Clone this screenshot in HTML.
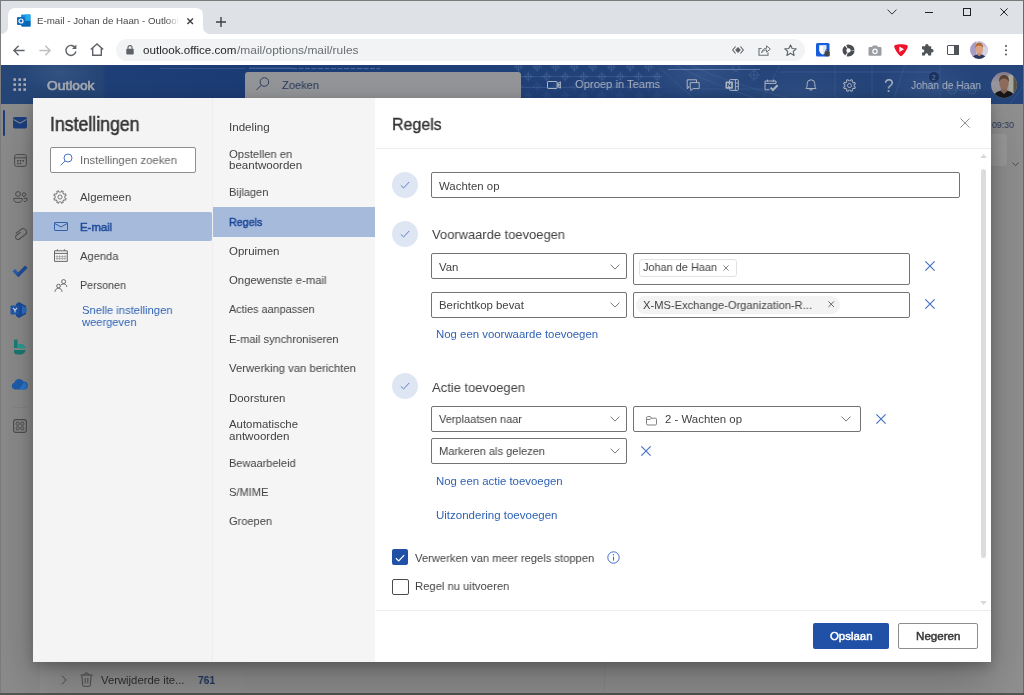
<!DOCTYPE html><html lang="nl"><head><meta charset="utf-8"><title>E-mail - Johan de Haan - Outlook</title><style>
*{box-sizing:border-box}
html,body{margin:0;padding:0}
body{width:1024px;height:695px;position:relative;overflow:hidden;background:#8f8f8f;font-family:"Liberation Sans",sans-serif}
.a{position:absolute}
.t{will-change:transform;position:absolute;white-space:pre;line-height:1;transform-origin:0 0;font-family:"Liberation Sans",sans-serif}
svg{position:absolute;overflow:visible}
.dd{position:absolute;height:26px;border:1px solid #737373;border-radius:2px;background:#fff}
.circ{position:absolute;width:26px;height:26px;border-radius:13px;background:#dfe6f3}
</style></head><body>
<div class="a" style="left:0;top:0;width:1024px;height:34px;background:#dee1e6"></div>
<div class="a" style="left:0;top:34px;width:1024px;height:31px;background:#fff"></div>
<div class="a" style="left:8px;top:7.5px;width:195px;height:27.5px;background:#fff;border-radius:7px 7px 0 0"></div>
<svg style="left:1px;top:27px" width="7" height="7" viewBox="0 0 7 7"><path d="M7 0 V7 H0 A7 7 0 0 0 7 0Z" fill="#fff"/></svg>
<svg style="left:203px;top:27px" width="7" height="7" viewBox="0 0 7 7"><path d="M0 0 V7 H7 A7 7 0 0 1 0 0Z" fill="#fff"/></svg>
<svg style="left:17px;top:14px" width="14" height="14" viewBox="0 0 14 14"><rect x="4" y="0.5" width="9.5" height="12" rx="1" fill="#1490df"/><rect x="8.5" y="0.5" width="5" height="6" fill="#28a8ea"/><path d="M4 7 L13.5 7 L13.5 12.5 L5 12.5Z" fill="#0a64b4"/><rect x="0" y="3" width="8" height="8" rx="1" fill="#0f6cbd"/><circle cx="4" cy="7" r="2" fill="none" stroke="#fff" stroke-width="1.2"/></svg>
<span class="t" style="left:36.5px;top:15px;line-height:11px;font-size:9.6px;transform:scaleX(1.0149);color:#45474a;font-weight:400;">E-mail - Johan de Haan - Outlook</span>
<div class="a" style="left:166px;top:10px;width:13px;height:22px;background:linear-gradient(90deg,rgba(255,255,255,0),#fff)"></div><div class="a" style="left:179px;top:10px;width:23px;height:22px;background:#fff"></div>
<svg style="left:186.60000000000002px;top:18.1px" width="6.4" height="6.4" viewBox="0 0 6.4 6.4"><path d="M0.4 0.4 L6.0 6.0 M6.0 0.4 L0.4 6.0" fill="none" stroke="#3c4043" stroke-width="1.4"/></svg>
<svg style="left:215.5px;top:16.5px" width="10" height="10" viewBox="0 0 10 10"><path d="M5 0 V10 M0 5 H10" stroke="#3c4043" stroke-width="1.4" fill="none"/></svg>
<svg style="left:886.8px;top:9.3px" width="10" height="6" viewBox="0 0 10 6"><path d="M0.5 0.6 L5 5.1 L9.5 0.6" fill="none" stroke="#333" stroke-width="1"/></svg>
<div class="a" style="left:925px;top:12px;width:8px;height:1px;background:#222"></div>
<div class="a" style="left:963px;top:8px;width:8px;height:8px;border:1px solid #222"></div>
<svg style="left:1000px;top:8px" width="8" height="8" viewBox="0 0 8 8"><path d="M0.4 0.4 L7.6 7.6 M7.6 0.4 L0.4 7.6" fill="none" stroke="#222" stroke-width="1"/></svg>
<svg style="left:13px;top:44.5px" width="12" height="11" viewBox="0 0 12 11"><path d="M11.6 5.5 H1.4 M5.6 0.8 L0.9 5.5 L5.6 10.2" fill="none" stroke="#5f6368" stroke-width="1.4"/></svg>
<svg style="left:39px;top:44.5px" width="12" height="11" viewBox="0 0 12 11"><path d="M0.4 5.5 H10.6 M6.4 0.8 L11.1 5.5 L6.4 10.2" fill="none" stroke="#bdbfc2" stroke-width="1.4"/></svg>
<svg style="left:65px;top:43.5px" width="12" height="12" viewBox="0 0 12 12"><path d="M10.3 3.9 A5 5 0 1 0 10.9 7.3" fill="none" stroke="#5f6368" stroke-width="1.4"/><path d="M11.4 0.6 V5 H7Z" fill="#5f6368"/></svg>
<svg style="left:90px;top:43px" width="14" height="13" viewBox="0 0 14 13"><path d="M0.8 6.6 L7 1 L13.2 6.6 M2.7 5.2 V12.2 H11.3 V5.2" fill="none" stroke="#5f6368" stroke-width="1.4"/></svg>
<div class="a" style="left:116px;top:39px;width:689px;height:22px;border-radius:11px;background:#f1f3f4"></div>
<svg style="left:126px;top:44.5px" width="8" height="10" viewBox="0 0 8 10"><rect x="0.3" y="3.8" width="7.4" height="5.8" rx="0.8" fill="#5f6368"/><path d="M2 4 V2.6 A2 2 0 0 1 6 2.6 V4" fill="none" stroke="#5f6368" stroke-width="1.1"/></svg>
<span class="t" style="left:142.8px;top:44px;line-height:12px;font-size:11px;transform:scaleX(1.0569);color:#25272a;font-weight:400;">outlook.office.com</span>
<span class="t" style="left:236.6px;top:44px;line-height:12px;font-size:11px;transform:scaleX(1.0860);color:#6b6e72;font-weight:400;">/mail/options/mail/rules</span>
<svg style="left:732px;top:45.6px" width="12" height="8" viewBox="0 0 12 8"><path d="M3.6 0.5 L0.7 4 L3.6 7.5 M8.4 0.5 L11.3 4 L8.4 7.5" fill="none" stroke="#5f6368" stroke-width="1.1"/><path d="M6 0.9 L8.9 4 L6 7.1 L3.1 4Z" fill="#5f6368"/></svg>
<svg style="left:758px;top:43.5px" width="13" height="12" viewBox="0 0 13 12"><path d="M3.5 4.5 H1 V11.3 H10 V8.5" fill="none" stroke="#6d7175" stroke-width="1.1"/><path d="M3.6 8.8 C4.2 5.6 6.2 4.3 8.6 4.2 V1.8 L12.3 5 L8.6 8.2 V5.9 C6.6 5.9 5 6.6 3.6 8.8Z" fill="none" stroke="#6d7175" stroke-width="1"/></svg>
<svg style="left:783.5px;top:43.5px" width="13" height="12" viewBox="0 0 13 12"><path d="M6.5 0.9 L8.2 4.5 L12.2 4.9 L9.2 7.5 L10.1 11.4 L6.5 9.3 L2.9 11.4 L3.8 7.5 L0.8 4.9 L4.8 4.5Z" fill="none" stroke="#5f6368" stroke-width="1.1" stroke-linejoin="round"/></svg>
<svg style="left:815.5px;top:43px" width="14" height="14" viewBox="0 0 14 14"><rect x="0" y="0" width="13.5" height="13.5" rx="1.5" fill="#175ddc"/><path d="M3.2 2.2 H10.3 V7.2 C10.3 9.6 8.3 11 6.75 11.6 C5.2 11 3.2 9.6 3.2 7.2Z" fill="#fff"/><path d="M6.75 2.2 H10.3 V7.2 C10.3 9.6 8.3 11 6.75 11.6Z" fill="#dce6fa"/><rect x="8.6" y="8.6" width="5" height="4.6" rx="0.6" fill="#444"/><path d="M9.7 8.8 V7.8 A1.4 1.4 0 0 1 12.5 7.8 V8.8" fill="none" stroke="#444" stroke-width="0.9"/></svg>
<svg style="left:841.5px;top:43.5px" width="13" height="13" viewBox="0 0 13 13"><circle cx="6.5" cy="6.5" r="4.1" fill="none" stroke="#4a4d51" stroke-width="3.9" stroke-dasharray="7.6 1"/></svg>
<svg style="left:867.5px;top:44.5px" width="14" height="11" viewBox="0 0 14 11"><path d="M1.5 2 H4 L5 0.6 H9 L10 2 H12.5 A1 1 0 0 1 13.5 3 V9.8 A1 1 0 0 1 12.5 10.8 H1.5 A1 1 0 0 1 0.5 9.8 V3 A1 1 0 0 1 1.5 2Z" fill="#9b9ea2"/><circle cx="7" cy="6.3" r="2.2" fill="none" stroke="#fff" stroke-width="1.2"/></svg>
<svg style="left:893.5px;top:43px" width="14" height="14" viewBox="0 0 14 14"><path d="M7 1.2 C9.5 1.2 11.4 1.5 12.8 2 C13.8 2.4 14 3.4 13.6 4.4 C12.4 7.6 10.4 10.6 8 12.8 C7.4 13.3 6.6 13.3 6 12.8 C3.6 10.6 1.6 7.6 0.4 4.4 C0 3.4 0.2 2.4 1.2 2 C2.6 1.5 4.5 1.2 7 1.2Z" fill="#f3122b"/><path d="M5.4 3.6 L10 6.2 L5.4 8.9Z" fill="#fff"/></svg>
<svg style="left:920px;top:43px" width="14" height="14" viewBox="0 0 14 14"><path d="M5.2 2.6 A1.7 1.7 0 0 1 8.6 2.6 V3.3 H11.2 V6 H11.9 A1.7 1.7 0 0 1 11.9 9.4 H11.2 V12.6 H8.2 V11.9 A1.6 1.6 0 0 0 5 11.9 V12.6 H2 V9.6 H2.6 A1.6 1.6 0 0 0 2.6 6.3 H2 V3.3 H5.2Z" fill="#4f5357"/></svg>
<div class="a" style="left:947px;top:44.5px;width:12px;height:10.5px;border:1.6px solid #4f5357;border-radius:1px"></div><div class="a" style="left:954.3px;top:44.5px;width:4.7px;height:10.5px;background:#4f5357"></div>
<svg style="left:970px;top:40.7px" width="18" height="18" viewBox="0 0 18 18"><defs><clipPath id="av2"><circle cx="9" cy="9" r="8.9"/></clipPath></defs><g clip-path="url(#av2)"><rect width="18" height="18" fill="#c9c2dc"/><rect x="0" y="0" width="6" height="18" fill="#a89cc4"/><rect x="13" y="6" width="5" height="12" fill="#d8d6dc"/><path d="M2 18 C2.5 15 5 14 7 13.6 L11.5 13.6 C13.5 14 15.5 15 16 18Z" fill="#2f3a58"/><ellipse cx="9.2" cy="8.3" rx="3.6" ry="4.9" fill="#d8a283"/><path d="M7.4 12 L11 12 L11 14 L9.2 15.2 L7.4 14Z" fill="#c58f74"/><path d="M5.5 7.4 C5 3.2 7 1.8 9.2 1.8 C11.6 1.8 13.4 3.2 12.9 7.4 C12.4 5.2 11.2 4.4 9.2 4.4 C7.2 4.4 6 5.2 5.5 7.4Z" fill="#b8692f"/></g></svg>
<div class="a" style="left:1004.5px;top:44.5px;width:2.4px;height:2.4px;border-radius:2px;background:#4f5357;box-shadow:0 4.2px 0 #4f5357,0 8.4px 0 #4f5357"></div>
<div class="a" style="left:0;top:65px;width:1024px;height:39px;background:linear-gradient(90deg,#264677 0,#264677 102px,#1e3f78 106px,#1c3c76 245px,#21417a 521px,#24447a 700px,#26467b 1024px)"></div>
<div class="a" style="left:0;top:65px;width:1024px;height:39px;background:radial-gradient(ellipse 60px 30px at 700px 10px,rgba(120,150,200,.18),rgba(120,150,200,0)),radial-gradient(ellipse 70px 30px at 800px 30px,rgba(120,150,200,.12),rgba(120,150,200,0)),radial-gradient(ellipse 50px 30px at 930px 20px,rgba(120,150,200,.14),rgba(120,150,200,0)),radial-gradient(ellipse 40px 20px at 60px 8px,rgba(130,160,200,.15),rgba(120,150,200,0))"></div>
<svg style="left:0;top:65px;overflow:hidden" width="1024" height="39" viewBox="0 0 1024 39"><g fill="none" stroke="#5d7bab" stroke-width="0.7"><g opacity="0.55"><circle cx="518.5" cy="2.0" r="2.8"/><path d="M513.5 2.0 H523.5 M518.5 -3.0 V7.0"/><circle cx="537.1" cy="2.0" r="2.8"/><path d="M532.1 2.0 H542.1 M537.1 -3.0 V7.0"/><circle cx="555.7" cy="2.0" r="2.8"/><path d="M550.7 2.0 H560.7 M555.7 -3.0 V7.0"/><circle cx="574.3" cy="2.0" r="2.8"/><path d="M569.3 2.0 H579.3 M574.3 -3.0 V7.0"/><circle cx="592.9" cy="2.0" r="2.8"/><path d="M587.9 2.0 H597.9 M592.9 -3.0 V7.0"/><circle cx="611.5" cy="2.0" r="2.8"/><path d="M606.5 2.0 H616.5 M611.5 -3.0 V7.0"/><circle cx="630.1" cy="2.0" r="2.8"/><path d="M625.1 2.0 H635.1 M630.1 -3.0 V7.0"/><circle cx="648.7" cy="2.0" r="2.8"/><path d="M643.7 2.0 H653.7 M648.7 -3.0 V7.0"/><circle cx="528.3" cy="11.6" r="2.8"/><path d="M523.3 11.6 H533.3 M528.3 6.6 V16.6"/><circle cx="546.7" cy="11.6" r="2.8"/><path d="M541.7 11.6 H551.7 M546.7 6.6 V16.6"/><circle cx="565.1" cy="11.6" r="2.8"/><path d="M560.1 11.6 H570.1 M565.1 6.6 V16.6"/><circle cx="583.5" cy="11.6" r="2.8"/><path d="M578.5 11.6 H588.5 M583.5 6.6 V16.6"/><circle cx="601.9" cy="11.6" r="2.8"/><path d="M596.9 11.6 H606.9 M601.9 6.6 V16.6"/><circle cx="620.3" cy="11.6" r="2.8"/><path d="M615.3 11.6 H625.3 M620.3 6.6 V16.6"/><circle cx="638.7" cy="11.6" r="2.8"/><path d="M633.7 11.6 H643.7 M638.7 6.6 V16.6"/><circle cx="657.1" cy="11.6" r="2.8"/><path d="M652.1 11.6 H662.1 M657.1 6.6 V16.6"/></g><g opacity="0.22"><circle cx="518.5" cy="21.2" r="2.8"/><path d="M513.5 21.2 H523.5 M518.5 16.2 V26.2"/><circle cx="537.1" cy="21.2" r="2.8"/><path d="M532.1 21.2 H542.1 M537.1 16.2 V26.2"/><circle cx="555.7" cy="21.2" r="2.8"/><path d="M550.7 21.2 H560.7 M555.7 16.2 V26.2"/><circle cx="574.3" cy="21.2" r="2.8"/><path d="M569.3 21.2 H579.3 M574.3 16.2 V26.2"/><circle cx="592.9" cy="21.2" r="2.8"/><path d="M587.9 21.2 H597.9 M592.9 16.2 V26.2"/><circle cx="611.5" cy="21.2" r="2.8"/><path d="M606.5 21.2 H616.5 M611.5 16.2 V26.2"/><circle cx="630.1" cy="21.2" r="2.8"/><path d="M625.1 21.2 H635.1 M630.1 16.2 V26.2"/><circle cx="648.7" cy="21.2" r="2.8"/><path d="M643.7 21.2 H653.7 M648.7 16.2 V26.2"/><circle cx="528.3" cy="30.8" r="2.8"/><path d="M523.3 30.8 H533.3 M528.3 25.8 V35.8"/><circle cx="546.7" cy="30.8" r="2.8"/><path d="M541.7 30.8 H551.7 M546.7 25.8 V35.8"/><circle cx="565.1" cy="30.8" r="2.8"/><path d="M560.1 30.8 H570.1 M565.1 25.8 V35.8"/><circle cx="583.5" cy="30.8" r="2.8"/><path d="M578.5 30.8 H588.5 M583.5 25.8 V35.8"/><circle cx="601.9" cy="30.8" r="2.8"/><path d="M596.9 30.8 H606.9 M601.9 25.8 V35.8"/><circle cx="620.3" cy="30.8" r="2.8"/><path d="M615.3 30.8 H625.3 M620.3 25.8 V35.8"/><circle cx="638.7" cy="30.8" r="2.8"/><path d="M633.7 30.8 H643.7 M638.7 25.8 V35.8"/><circle cx="657.1" cy="30.8" r="2.8"/><path d="M652.1 30.8 H662.1 M657.1 25.8 V35.8"/></g><g opacity="0.5"><path d="M521 22.4 H662 M521 11.6 H660 M160 3.5 H245"/><circle cx="754" cy="10" r="4"/><path d="M748 10 H760 M754 4 V16"/><circle cx="736" cy="3" r="3.4"/><circle cx="952" cy="25" r="4"/><circle cx="972" cy="25" r="4"/><path d="M946 25 H978"/></g><g opacity="0.35"><path d="M676 0 C700 14 730 24 770 39 M690 0 C715 12 745 22 800 36 M660 3 L700 39 M835 0 V39 M872 0 V39 M905 0 L892 39 M780 0 L760 39 M700 24 H780 M940 0 V39 M1010 39 L1024 20"/></g><g stroke="#7f9cc9" opacity="0.6"><path d="M668 4.5 H760" stroke-width="1"/><path d="M249 3.2 H292" stroke-width="0.9"/><path d="M292 3.6 H380" stroke-width="1" stroke-dasharray="5 1.5" opacity=".8"/><path d="M780 7 H940" stroke-width="0.6" opacity=".5"/></g></g></svg>
<div class="a" style="left:928.5px;top:71.5px;width:10.5px;height:10.5px;border-radius:6px;background:rgba(24,44,86,.75)"></div>
<span class="t" style="left:932.0px;top:74px;line-height:7px;font-size:6.5px;transform:scaleX(1.0000);color:#6d84ad;font-weight:400;">2</span>
<svg style="left:13px;top:78px" width="14" height="14" viewBox="0 0 14 14"><rect x="0.4" y="0.3" width="2.6" height="2.6" fill="#a8aab0"/><rect x="0.4" y="5.3" width="2.6" height="2.6" fill="#a8aab0"/><rect x="0.4" y="10.3" width="2.6" height="2.6" fill="#a8aab0"/><rect x="5.4" y="0.3" width="2.6" height="2.6" fill="#a8aab0"/><rect x="5.4" y="5.3" width="2.6" height="2.6" fill="#a8aab0"/><rect x="5.4" y="10.3" width="2.6" height="2.6" fill="#a8aab0"/><rect x="10.4" y="0.3" width="2.6" height="2.6" fill="#a8aab0"/><rect x="10.4" y="5.3" width="2.6" height="2.6" fill="#a8aab0"/><rect x="10.4" y="10.3" width="2.6" height="2.6" fill="#a8aab0"/></svg>
<span class="t" style="left:46.5px;top:78px;line-height:15px;font-size:13px;transform:scaleX(1.0600);color:#a4a9b3;font-weight:400;-webkit-text-stroke:0.7px #a4a9b3;">Outlook</span>
<div class="a" style="left:245px;top:72px;width:276px;height:30px;border-radius:3px;background:#949699"></div>
<svg style="left:256px;top:77.2px" width="13" height="14" viewBox="0 0 13 14"><circle cx="8.4" cy="5" r="4.3" fill="none" stroke="#2f3f5f" stroke-width="1"/><path d="M5.3 8.1 L0.5 12.9" stroke="#2f3f5f" stroke-width="1"/></svg>
<span class="t" style="left:282.0px;top:79px;line-height:12px;font-size:11.4px;transform:scaleX(0.9737);color:#27395c;font-weight:400;">Zoeken</span>
<svg style="left:547px;top:80.5px" width="15" height="8" viewBox="0 0 15 8"><rect x="0.5" y="0.5" width="9.6" height="7" rx="0.6" fill="none" stroke="#b0b7c6" stroke-width="1"/><path d="M10.2 2.6 L13.4 0.8 V7.2 L10.2 5.4" fill="none" stroke="#b0b7c6" stroke-width="1"/><rect x="10.6" y="2.6" width="2" height="2.8" fill="#b0b7c6"/></svg>
<span class="t" style="left:575.0px;top:77px;line-height:14px;font-size:11.8px;transform:scaleX(0.9484);color:#b0b7c6;font-weight:400;">Oproep in Teams</span>
<svg style="left:686px;top:78.5px" width="14" height="13" viewBox="0 0 14 13"><path d="M3 7.8 H1.2 V0.8 H10.5 V3.2" fill="none" stroke="#b0b7c6" stroke-width="1"/><path d="M4.2 3.6 H13.2 V9.6 H7 L4.8 11.6 V9.6 H4.2Z" fill="none" stroke="#b0b7c6" stroke-width="1"/><path d="M1.2 7.8 L1.2 10 L3.2 7.8" fill="none" stroke="#b0b7c6" stroke-width="0.9"/></svg>
<svg style="left:725px;top:79px" width="14" height="12" viewBox="0 0 14 12"><rect x="4.5" y="0.6" width="8.8" height="10.8" rx="0.8" fill="none" stroke="#b0b7c6" stroke-width="1"/><path d="M10.4 0.6 V11.4 M10.4 4 H13.3 M10.4 7.6 H13.3" stroke="#b0b7c6" stroke-width="0.9"/><rect x="0.5" y="2.4" width="7.4" height="7.4" rx="0.7" fill="#b0b7c6"/><path d="M2.7 8 V4.2 L5.7 8 V4.2" fill="none" stroke="#274778" stroke-width="1"/></svg>
<svg style="left:764px;top:78.5px" width="15" height="13" viewBox="0 0 15 13"><path d="M12 4.5 V2 H1 V10.8 H5.5 M1 4.4 H12 M3.6 0.6 V3 M9.4 0.6 V3" fill="none" stroke="#b0b7c6" stroke-width="1"/><path d="M6.6 8.6 L8.9 11 L13.6 6.2" fill="none" stroke="#b0b7c6" stroke-width="2"/></svg>
<svg style="left:804.5px;top:78px" width="12" height="14" viewBox="0 0 12 14"><path d="M1 10.5 C2.3 9 2.1 7.4 2.2 5.6 A3.8 3.8 0 0 1 9.8 5.6 C9.9 7.4 9.7 9 11 10.5Z" fill="none" stroke="#b0b7c6" stroke-width="1" stroke-linejoin="round"/><path d="M4.4 11 A1.7 1.7 0 0 0 7.6 11" fill="none" stroke="#b0b7c6" stroke-width="1"/></svg>
<svg style="left:842.5px;top:78.5px" width="13" height="13" viewBox="0 0 13 13"><path d="M11.09 5.47 L12.55 5.74 L12.55 7.26 L11.09 7.53 L10.47 9.02 L11.32 10.24 L10.24 11.32 L9.02 10.47 L7.53 11.09 L7.26 12.55 L5.74 12.55 L5.47 11.09 L3.98 10.47 L2.76 11.32 L1.68 10.24 L2.53 9.02 L1.91 7.53 L0.45 7.26 L0.45 5.74 L1.91 5.47 L2.53 3.98 L1.68 2.76 L2.76 1.68 L3.98 2.53 L5.47 1.91 L5.74 0.45 L7.26 0.45 L7.53 1.91 L9.02 2.53 L10.24 1.68 L11.32 2.76 L10.47 3.98Z" fill="none" stroke="#b0b7c6" stroke-width="0.95" stroke-linejoin="round" transform="rotate(22.5 6.5 6.5)"/><circle cx="6.5" cy="6.5" r="2" fill="none" stroke="#b0b7c6" stroke-width="0.95"/></svg>
<span class="t" style="left:883.6px;top:75px;line-height:21px;font-size:19px;transform:scaleX(0.9075);color:#b0b7c6;font-weight:400;">?</span>
<span class="t" style="left:911.0px;top:78px;line-height:14px;font-size:11.8px;transform:scaleX(0.8747);color:#b0b7c6;font-weight:400;">Johan de Haan</span>
<svg style="left:990.5px;top:71.8px" width="26" height="26" viewBox="0 0 26 26"><defs><clipPath id="av1"><circle cx="13" cy="13" r="12.9"/></clipPath><linearGradient id="avbg" x1="0" y1="0" x2="0" y2="1"><stop offset="0" stop-color="#84798a"/><stop offset="0.45" stop-color="#9a99a0"/><stop offset="1" stop-color="#8d8d88"/></linearGradient></defs><g clip-path="url(#av1)"><rect width="26" height="26" fill="url(#avbg)"/><rect x="17.5" y="3" width="5" height="18" fill="#a8a79c"/><rect x="22.5" y="0" width="4" height="26" fill="#5d5448"/><path d="M2.5 26 C3 21 6 19.5 10 18.8 L16 18.8 C20 19.5 23 21 23.5 26Z" fill="#17171a"/><path d="M10.2 16 L15.8 16 L16 19.5 L13 22 L10 19.5Z" fill="#80604f"/><ellipse cx="13" cy="11.6" rx="4.6" ry="6.3" fill="#8f6c5b"/><path d="M8.2 10.5 C7.6 5 10 3 13 3 C16 3 18.6 5 17.8 10.5 C17.2 7.6 15.6 6.4 13 6.4 C10.4 6.4 8.8 7.6 8.2 10.5Z" fill="#5b4132"/></g></svg>
<div class="a" style="left:0;top:104px;width:40px;height:591px;background:#8c8c8c"></div>
<div class="a" style="left:40px;top:104px;width:205px;height:591px;background:#919191"></div>
<div class="a" style="left:245px;top:104px;width:779px;height:591px;background:#909090"></div>
<div class="a" style="left:604px;top:104px;width:1px;height:591px;background:#8a8a8a"></div>
<div class="a" style="left:3px;top:110px;width:2px;height:26px;border-radius:1px;background:#1e3f7c"></div>
<svg style="left:13px;top:117px" width="14" height="12" viewBox="0 0 14 12"><rect x="0" y="0" width="14" height="11.4" rx="2" fill="#1c3f80"/><path d="M0.6 2.6 L7 6.2 L13.4 2.6" fill="none" stroke="#8c8c8c" stroke-width="1.1"/></svg>
<svg style="left:14px;top:154px" width="13" height="13" viewBox="0 0 13 13"><rect x="0.6" y="0.6" width="11.8" height="11.8" rx="2" fill="none" stroke="#4e4e4e" stroke-width="1"/><path d="M0.6 3.8 H12.4" stroke="#4e4e4e" stroke-width="1"/><g fill="#4e4e4e"><rect x="3" y="6" width="1.6" height="1.6"/><rect x="5.7" y="6" width="1.6" height="1.6"/><rect x="8.4" y="6" width="1.6" height="1.6"/><rect x="3" y="8.7" width="1.6" height="1.6"/><rect x="5.7" y="8.7" width="1.6" height="1.6"/></g></svg>
<svg style="left:13px;top:191px" width="15" height="12" viewBox="0 0 15 12"><circle cx="5" cy="3" r="2.4" fill="none" stroke="#4e4e4e" stroke-width="1"/><circle cx="11" cy="3.6" r="1.8" fill="none" stroke="#4e4e4e" stroke-width="1"/><path d="M0.8 7.4 H9.2 V8.4 C9.2 10.4 7.4 11.4 5 11.4 C2.6 11.4 0.8 10.4 0.8 8.4Z" fill="none" stroke="#4e4e4e" stroke-width="1"/><path d="M10.6 7.4 H14.2 V8.2 C14.2 9.8 13 10.6 10.8 10.6" fill="none" stroke="#4e4e4e" stroke-width="1"/></svg>
<svg style="left:14px;top:228px" width="13" height="14" viewBox="0 0 13 14"><path d="M6.2 4.2 L2.6 7.8 A2.3 2.3 0 0 0 5.9 11.1 L11 6 A3.3 3.3 0 0 0 6.3 1.3 L1.6 6" fill="none" stroke="#4e4e4e" stroke-width="1" transform="rotate(8 6.5 7)"/></svg>
<svg style="left:12px;top:265px" width="16" height="13" viewBox="0 0 16 13"><path d="M0.6 6.4 L3 4 L6.4 7.4 L3.9 9.8Z" fill="#2a5fb4"/><path d="M3.9 9.8 L6.4 12.2 L15.6 3 L13.1 0.6Z" fill="#1f4f9f"/></svg>
<svg style="left:10px;top:301px" width="18" height="18" viewBox="0 0 18 18"><path d="M9 1 L16 5 V13 L9 17 L6 15 V3Z" fill="#1b4d99"/><path d="M12 4.5 L16.6 7 V11 L12 13.5Z" fill="#2f6ec5"/><rect x="0.5" y="4.5" width="9" height="9" rx="1" fill="#1f57ad"/><path d="M3 6.8 L5 9.4 L7 6.8 M5 9.4 V11.6" fill="none" stroke="#d8d8d8" stroke-width="1.1"/></svg>
<svg style="left:13px;top:339px" width="13" height="16" viewBox="0 0 13 16"><path d="M1 0.6 H4.6 V9 H1Z" fill="#1b7f79"/><path d="M4.6 5 H8 A4.6 4.6 0 0 1 12.4 9.6 H4.6Z" fill="#2a9d92"/><path d="M1 11 H12.4 A4.4 4.4 0 0 1 8 15.4 H4 A3 3 0 0 1 1 12.4Z" fill="#197a74"/></svg>
<svg style="left:11px;top:378px" width="18" height="12" viewBox="0 0 18 12"><path d="M4 11.4 A3.4 3.4 0 0 1 3.4 4.7 A5 5 0 0 1 12.6 3.6 A4 4 0 0 1 14 11.4Z" fill="#1e5fae"/><path d="M8 11.4 L13 4.2 A4 4 0 0 1 14 11.4Z" fill="#2c79cf"/></svg>
<div class="a" style="left:13px;top:407px;width:14px;height:1px;background:#858585"></div>
<svg style="left:13px;top:419px" width="14" height="14" viewBox="0 0 14 14"><rect x="0.6" y="0.6" width="12.8" height="12.8" rx="2.4" fill="none" stroke="#4e4e4e" stroke-width="1.1"/><g fill="none" stroke="#4e4e4e" stroke-width="1"><rect x="3.2" y="3.2" width="3" height="3" rx="0.8"/><rect x="7.8" y="3.2" width="3" height="3" rx="0.8"/><rect x="3.2" y="7.8" width="3" height="3" rx="0.8"/><rect x="7.8" y="7.8" width="3" height="3" rx="0.8"/></g></svg>
<svg style="left:61px;top:674.5px" width="6" height="10" viewBox="0 0 6 10"><path d="M0.8 0.6 L5.2 5 L0.8 9.4" fill="none" stroke="#4e4e4e" stroke-width="1"/></svg>
<svg style="left:80px;top:672px" width="13" height="15" viewBox="0 0 13 15"><path d="M0.5 3 H12.5 M4.4 3 A2.1 2.1 0 0 1 8.6 3 M1.8 3 L2.7 13.2 A1.2 1.2 0 0 0 3.9 14.3 H9.1 A1.2 1.2 0 0 0 10.3 13.2 L11.2 3 M5.2 6 V11.4 M7.8 6 V11.4" fill="none" stroke="#4e4e4e" stroke-width="1"/></svg>
<span class="t" style="left:101.0px;top:674px;line-height:12px;font-size:11.2px;transform:scaleX(1.0094);color:#2e2e2e;font-weight:400;">Verwijderde ite...</span>
<span class="t" style="left:197.5px;top:674px;line-height:12px;font-size:11.2px;transform:scaleX(0.9105);color:#1c3561;font-weight:700;">761</span>
<div class="a" style="left:986px;top:133.5px;width:20.5px;height:32.5px;border-radius:3px;background:#9a9a9a"></div>
<span class="t" style="left:991.5px;top:119px;line-height:11px;font-size:9.6px;transform:scaleX(0.9161);color:#273a5e;font-weight:400;">09:30</span>
<svg style="left:1011.5px;top:161.5px" width="7" height="4.5" viewBox="0 0 7 4.5"><path d="M0.4 0.5 L3.5 3.7 L6.6 0.5" fill="none" stroke="#4c4543" stroke-width="0.9"/></svg>
<div class="a" style="left:0;top:0;width:1024px;height:1px;background:#7a7a7a"></div>
<div class="a" style="left:0;top:0;width:1px;height:695px;background:#7d7d7d"></div>
<div class="a" style="left:1023px;top:0;width:1px;height:695px;background:#6a6a6a"></div>
<div class="a" style="left:0;top:693px;width:1024px;height:2px;background:#555"></div>
<div class="a" style="left:33px;top:98px;width:957.5px;height:563.5px;background:#fff;box-shadow:0 20px 46px rgba(0,0,0,.26),0 4px 12px rgba(0,0,0,.24)"></div>
<div class="a" style="left:33px;top:98px;width:179.5px;height:563.5px;background:#f4f4f4"></div>
<div class="a" style="left:212px;top:98px;width:163.4px;height:563.5px;background:#f5f5f5;border-left:1px solid #eeeeee"></div>
<span class="t" style="left:50.0px;top:113px;line-height:22px;font-size:19.6px;transform:scaleX(0.9028);color:#333;font-weight:400;-webkit-text-stroke:0.55px #333;">Instellingen</span>
<div class="a" style="left:50px;top:147px;width:146px;height:26px;border:1px solid #8d8d8d;border-radius:2px;background:#fff"></div>
<svg style="left:60px;top:153px" width="13" height="13" viewBox="0 0 13 13"><circle cx="8" cy="5" r="4" fill="none" stroke="#4b74c4" stroke-width="1"/><path d="M5.1 7.9 L0.6 12.4" stroke="#4b74c4" stroke-width="1"/></svg>
<span class="t" style="left:80.0px;top:154px;line-height:12px;font-size:11.4px;transform:scaleX(0.9946);color:#666;font-weight:400;">Instellingen zoeken</span>
<div class="a" style="left:33px;top:212px;width:179px;height:29px;background:#a6badc;border-radius:0 2px 2px 0"></div>
<svg style="left:53px;top:190px" width="14" height="14" viewBox="0 0 14 14"><path d="M11.78 5.93 L13.35 6.20 L13.35 7.80 L11.78 8.07 L11.14 9.63 L12.06 10.92 L10.92 12.06 L9.63 11.14 L8.07 11.78 L7.80 13.35 L6.20 13.35 L5.93 11.78 L4.37 11.14 L3.08 12.06 L1.94 10.92 L2.86 9.63 L2.22 8.07 L0.65 7.80 L0.65 6.20 L2.22 5.93 L2.86 4.37 L1.94 3.08 L3.08 1.94 L4.37 2.86 L5.93 2.22 L6.20 0.65 L7.80 0.65 L8.07 2.22 L9.63 2.86 L10.92 1.94 L12.06 3.08 L11.14 4.37Z" fill="none" stroke="#686868" stroke-width="0.9" stroke-linejoin="round" transform="rotate(22.5 7 7)"/><circle cx="7" cy="7" r="2.1" fill="none" stroke="#686868" stroke-width="0.9"/></svg>
<span class="t" style="left:80.0px;top:191px;line-height:12px;font-size:11.4px;transform:scaleX(0.9942);color:#414141;font-weight:400;">Algemeen</span>
<svg style="left:53.5px;top:222px" width="14" height="9" viewBox="0 0 14 9"><rect x="0.5" y="0.5" width="13" height="8" rx="0.6" fill="none" stroke="#2c59a8" stroke-width="0.95"/><path d="M0.8 1.5 L7 5 L13.2 1.5" fill="none" stroke="#2c59a8" stroke-width="0.95"/></svg>
<span class="t" style="left:80.0px;top:221px;line-height:12px;font-size:11.4px;transform:scaleX(0.9913);color:#1f4a99;font-weight:400;-webkit-text-stroke:0.5px #1f4a99;">E-mail</span>
<svg style="left:53.5px;top:249px" width="14" height="13" viewBox="0 0 14 13"><path d="M0.5 1.8 H13.3 V12.4 H0.5Z M0.5 4.4 H13.3 M3.4 0.3 V1.8 M10.4 0.3 V1.8" fill="none" stroke="#686868" stroke-width="1"/><path d="M3 6.2 V11 M5.6 6.2 V11 M8.3 6.2 V11 M11 6.2 V11 M1.6 7.6 H12.4 M1.6 9.6 H12.4" stroke="#686868" stroke-width="0.8" opacity=".6"/></svg>
<span class="t" style="left:80.0px;top:250px;line-height:12px;font-size:11.4px;transform:scaleX(0.9801);color:#414141;font-weight:400;">Agenda</span>
<svg style="left:53.5px;top:278.5px" width="13" height="13" viewBox="0 0 13 13"><circle cx="9.6" cy="2.6" r="2" fill="none" stroke="#686868" stroke-width="1"/><circle cx="4.5" cy="7" r="1.8" fill="none" stroke="#686868" stroke-width="1"/><path d="M0.9 12.8 C1.2 10.4 2.6 9.3 4.5 9.3 C6.4 9.3 7.8 10.4 8.1 12.8 M6.6 6.2 C7.4 5.3 8.4 4.9 9.6 4.9 C11.4 4.9 12.6 6 12.9 8" fill="none" stroke="#686868" stroke-width="1"/></svg>
<span class="t" style="left:80.0px;top:279px;line-height:12px;font-size:11.4px;transform:scaleX(0.9433);color:#414141;font-weight:400;">Personen</span>
<span class="t" style="left:81.6px;top:304px;line-height:12px;font-size:11.4px;transform:scaleX(0.9855);color:#2f62b5;font-weight:400;">Snelle instellingen</span>
<span class="t" style="left:81.6px;top:316px;line-height:12px;font-size:11.4px;transform:scaleX(0.9779);color:#2f62b5;font-weight:400;">weergeven</span>
<div class="a" style="left:213px;top:207px;width:162.4px;height:29.5px;background:#a6badc"></div>
<span class="t" style="left:229.0px;top:121px;line-height:12px;font-size:11.4px;transform:scaleX(1.0174);color:#414141;font-weight:400;">Indeling</span>
<span class="t" style="left:229.0px;top:148px;line-height:12px;font-size:11.4px;transform:scaleX(0.9911);color:#414141;font-weight:400;">Opstellen en</span>
<span class="t" style="left:229.0px;top:159px;line-height:12px;font-size:11.4px;transform:scaleX(1.0138);color:#414141;font-weight:400;">beantwoorden</span>
<span class="t" style="left:229.0px;top:186px;line-height:12px;font-size:11.4px;transform:scaleX(0.9721);color:#414141;font-weight:400;">Bijlagen</span>
<span class="t" style="left:229.0px;top:216px;line-height:12px;font-size:11.4px;transform:scaleX(0.9389);color:#1f4a99;font-weight:400;-webkit-text-stroke:0.5px #1f4a99;">Regels</span>
<span class="t" style="left:229.0px;top:245px;line-height:12px;font-size:11.4px;transform:scaleX(1.0077);color:#414141;font-weight:400;">Opruimen</span>
<span class="t" style="left:229.0px;top:274px;line-height:12px;font-size:11.4px;transform:scaleX(0.9945);color:#414141;font-weight:400;">Ongewenste e-mail</span>
<span class="t" style="left:229.0px;top:303px;line-height:12px;font-size:11.4px;transform:scaleX(0.9519);color:#414141;font-weight:400;">Acties aanpassen</span>
<span class="t" style="left:229.0px;top:333px;line-height:12px;font-size:11.4px;transform:scaleX(0.9726);color:#414141;font-weight:400;">E-mail synchroniseren</span>
<span class="t" style="left:229.0px;top:362px;line-height:12px;font-size:11.4px;transform:scaleX(0.9929);color:#414141;font-weight:400;">Verwerking van berichten</span>
<span class="t" style="left:229.0px;top:392px;line-height:12px;font-size:11.4px;transform:scaleX(1.0007);color:#414141;font-weight:400;">Doorsturen</span>
<span class="t" style="left:229.0px;top:418px;line-height:12px;font-size:11.4px;transform:scaleX(0.9998);color:#414141;font-weight:400;">Automatische</span>
<span class="t" style="left:229.0px;top:430px;line-height:12px;font-size:11.4px;transform:scaleX(1.0163);color:#414141;font-weight:400;">antwoorden</span>
<span class="t" style="left:229.0px;top:457px;line-height:12px;font-size:11.4px;transform:scaleX(0.9648);color:#414141;font-weight:400;">Bewaarbeleid</span>
<span class="t" style="left:229.0px;top:486px;line-height:12px;font-size:11.4px;transform:scaleX(0.9725);color:#414141;font-weight:400;">S/MIME</span>
<span class="t" style="left:229.0px;top:515px;line-height:12px;font-size:11.4px;transform:scaleX(0.9700);color:#414141;font-weight:400;">Groepen</span>
<span class="t" style="left:392.3px;top:115px;line-height:19px;font-size:16.6px;transform:scaleX(0.9621);color:#333;font-weight:400;-webkit-text-stroke:0.35px #333;">Regels</span>
<svg style="left:959.6px;top:118px" width="10" height="10" viewBox="0 0 10 10"><path d="M0.4 0.4 L9.6 9.6 M9.6 0.4 L0.4 9.6" fill="none" stroke="#858585" stroke-width="0.9"/></svg>
<div class="a" style="left:376px;top:148px;width:614.5px;height:1px;background:#ececec"></div>
<div class="a" style="left:981px;top:169px;width:4.5px;height:388.5px;border-radius:2.5px;background:#dcdcdc"></div>
<svg style="left:980px;top:154px" width="7" height="4" viewBox="0 0 7 4"><path d="M0 4 L3.5 0 L7 4Z" fill="#d4dbe0"/></svg>
<svg style="left:980px;top:600.8px" width="7" height="4" viewBox="0 0 7 4"><path d="M0 0 L3.5 4 L7 0Z" fill="#d4dbe0"/></svg>
<div class="circ" style="left:392px;top:172px"></div><svg style="left:400px;top:181px" width="10" height="8" viewBox="0 0 10 8"><path d="M0.8 4.3 L3.6 7 L9.2 1" fill="none" stroke="#5578c4" stroke-width="0.95"/></svg>
<div class="dd" style="left:431px;top:172px;width:528.7px"></div>
<span class="t" style="left:438.6px;top:180px;line-height:12px;font-size:11.4px;transform:scaleX(1.0021);color:#414141;font-weight:400;">Wachten op</span>
<div class="circ" style="left:392px;top:221px"></div><svg style="left:400px;top:230px" width="10" height="8" viewBox="0 0 10 8"><path d="M0.8 4.3 L3.6 7 L9.2 1" fill="none" stroke="#5578c4" stroke-width="0.95"/></svg>
<span class="t" style="left:431.5px;top:227px;line-height:15px;font-size:13.2px;transform:scaleX(0.9804);color:#414141;font-weight:400;">Voorwaarde toevoegen</span>
<div class="dd" style="left:431px;top:253px;width:196px"></div><svg style="left:610px;top:263.5px" width="10" height="6" viewBox="0 0 10 6"><path d="M0.5 0.6 L5 5.1 L9.5 0.6" fill="none" stroke="#767676" stroke-width="1"/></svg>
<span class="t" style="left:438.6px;top:261px;line-height:12px;font-size:11.4px;transform:scaleX(0.9783);color:#414141;font-weight:400;">Van</span>
<div class="dd" style="left:633px;top:253px;width:277px;height:32px"></div>
<div class="a" style="left:639px;top:258.5px;width:97.5px;height:18.5px;border:1px solid #e2e2e2;border-radius:3px;background:#fff"></div>
<span class="t" style="left:643.2px;top:261px;line-height:12px;font-size:11.2px;transform:scaleX(0.9751);color:#414141;font-weight:400;">Johan de Haan</span>
<svg style="left:723.3px;top:264.6px" width="6" height="6" viewBox="0 0 6 6"><path d="M0.4 0.4 L5.6 5.6 M5.6 0.4 L0.4 5.6" fill="none" stroke="#777" stroke-width="0.9"/></svg>
<svg style="left:924.5px;top:261.4px" width="10" height="10" viewBox="0 0 10 10"><path d="M0.4 0.4 L9.6 9.6 M9.6 0.4 L0.4 9.6" fill="none" stroke="#4670c2" stroke-width="1.15"/></svg>
<div class="dd" style="left:431px;top:292px;width:196px"></div><svg style="left:610px;top:302px" width="10" height="6" viewBox="0 0 10 6"><path d="M0.5 0.6 L5 5.1 L9.5 0.6" fill="none" stroke="#767676" stroke-width="1"/></svg>
<span class="t" style="left:438.6px;top:299px;line-height:12px;font-size:11.4px;transform:scaleX(0.9958);color:#414141;font-weight:400;">Berichtkop bevat</span>
<div class="dd" style="left:633px;top:292px;width:277px"></div>
<div class="a" style="left:636px;top:295.5px;width:204px;height:18.5px;border-radius:9.5px;background:#f3f3f3"></div>
<span class="t" style="left:643.0px;top:299px;line-height:12px;font-size:11.2px;transform:scaleX(0.9956);color:#414141;font-weight:400;">X-MS-Exchange-Organization-R...</span>
<svg style="left:828.4px;top:301.40000000000003px" width="6.4" height="6.4" viewBox="0 0 6.4 6.4"><path d="M0.4 0.4 L6.0 6.0 M6.0 0.4 L0.4 6.0" fill="none" stroke="#555" stroke-width="0.9"/></svg>
<svg style="left:924.5px;top:299.3px" width="10" height="10" viewBox="0 0 10 10"><path d="M0.4 0.4 L9.6 9.6 M9.6 0.4 L0.4 9.6" fill="none" stroke="#4670c2" stroke-width="1.15"/></svg>
<span class="t" style="left:435.5px;top:328px;line-height:12px;font-size:11.4px;transform:scaleX(0.9992);color:#2f62b5;font-weight:400;">Nog een voorwaarde toevoegen</span>
<div class="circ" style="left:392px;top:373px"></div><svg style="left:400px;top:382px" width="10" height="8" viewBox="0 0 10 8"><path d="M0.8 4.3 L3.6 7 L9.2 1" fill="none" stroke="#5578c4" stroke-width="0.95"/></svg>
<span class="t" style="left:431.5px;top:380px;line-height:15px;font-size:13.2px;transform:scaleX(0.9832);color:#414141;font-weight:400;">Actie toevoegen</span>
<div class="dd" style="left:431px;top:406px;width:196px"></div><svg style="left:610px;top:416px" width="10" height="6" viewBox="0 0 10 6"><path d="M0.5 0.6 L5 5.1 L9.5 0.6" fill="none" stroke="#767676" stroke-width="1"/></svg>
<span class="t" style="left:438.6px;top:413px;line-height:12px;font-size:11.4px;transform:scaleX(0.9637);color:#414141;font-weight:400;">Verplaatsen naar</span>
<div class="dd" style="left:633px;top:406px;width:228px"></div><svg style="left:841.3px;top:416px" width="10" height="6" viewBox="0 0 10 6"><path d="M0.5 0.6 L5 5.1 L9.5 0.6" fill="none" stroke="#767676" stroke-width="1"/></svg>
<svg style="left:646px;top:415.5px" width="11" height="10" viewBox="0 0 11 10"><path d="M0.5 2.8 V7.8 A1.2 1.2 0 0 0 1.7 9 H9.3 A1.2 1.2 0 0 0 10.5 7.8 V3.4 A1.2 1.2 0 0 0 9.3 2.2 H5.4 L4.4 0.6 H1.7 A1.2 1.2 0 0 0 0.5 1.8Z M0.5 3.4 H4.4 L5.4 2.2" fill="none" stroke="#727272" stroke-width="0.9" stroke-linejoin="round"/></svg>
<span class="t" style="left:665.0px;top:413px;line-height:12px;font-size:11.4px;transform:scaleX(1.0022);color:#414141;font-weight:400;">2 - Wachten op</span>
<svg style="left:875.6px;top:413.6px" width="10" height="10" viewBox="0 0 10 10"><path d="M0.4 0.4 L9.6 9.6 M9.6 0.4 L0.4 9.6" fill="none" stroke="#4670c2" stroke-width="1.15"/></svg>
<div class="dd" style="left:431px;top:438px;width:196px"></div><svg style="left:610px;top:448px" width="10" height="6" viewBox="0 0 10 6"><path d="M0.5 0.6 L5 5.1 L9.5 0.6" fill="none" stroke="#767676" stroke-width="1"/></svg>
<span class="t" style="left:438.6px;top:445px;line-height:12px;font-size:11.4px;transform:scaleX(0.9733);color:#414141;font-weight:400;">Markeren als gelezen</span>
<svg style="left:640.8px;top:446.3px" width="10" height="10" viewBox="0 0 10 10"><path d="M0.4 0.4 L9.6 9.6 M9.6 0.4 L0.4 9.6" fill="none" stroke="#4670c2" stroke-width="1.15"/></svg>
<span class="t" style="left:435.5px;top:475px;line-height:12px;font-size:11.4px;transform:scaleX(0.9986);color:#2f62b5;font-weight:400;">Nog een actie toevoegen</span>
<span class="t" style="left:435.5px;top:509px;line-height:12px;font-size:11.4px;transform:scaleX(1.0097);color:#2f62b5;font-weight:400;">Uitzondering toevoegen</span>
<div class="a" style="left:392px;top:549px;width:16.2px;height:16.2px;border-radius:2px;background:#2151a6"></div>
<svg style="left:395px;top:553.5px" width="10" height="8" viewBox="0 0 10 8"><path d="M0.9 4.2 L3.7 6.9 L9.2 1.2" fill="none" stroke="#fff" stroke-width="1.2"/></svg>
<span class="t" style="left:415.0px;top:552px;line-height:12px;font-size:11.4px;transform:scaleX(0.9832);color:#414141;font-weight:400;">Verwerken van meer regels stoppen</span>
<svg style="left:607px;top:551px" width="13" height="13" viewBox="0 0 13 13"><circle cx="6.5" cy="6.5" r="5.7" fill="none" stroke="#3f6fc4" stroke-width="1"/><path d="M6.5 5.6 V9.6" stroke="#3f6fc4" stroke-width="1.1"/><circle cx="6.5" cy="3.8" r="0.7" fill="#3f6fc4"/></svg>
<div class="a" style="left:392px;top:578.5px;width:16.5px;height:16.5px;border:1px solid #4a4a4a;border-radius:2px;background:#fff"></div>
<span class="t" style="left:415.0px;top:580px;line-height:12px;font-size:11.4px;transform:scaleX(0.9861);color:#414141;font-weight:400;">Regel nu uitvoeren</span>
<div class="a" style="left:376px;top:610px;width:614.5px;height:1px;background:#ececec"></div>
<div class="a" style="left:813px;top:623px;width:76px;height:26.4px;border-radius:2px;background:#2151a6"></div>
<span class="t" style="left:830.0px;top:630px;line-height:12px;font-size:11.4px;transform:scaleX(1.0015);color:#fff;font-weight:400;-webkit-text-stroke:0.5px #fff;">Opslaan</span>
<div class="a" style="left:898px;top:623px;width:80px;height:26.4px;border:1px solid #8d8d8d;border-radius:2px;background:#fff"></div>
<span class="t" style="left:916.0px;top:630px;line-height:12px;font-size:11.4px;transform:scaleX(1.0182);color:#3a3a3a;font-weight:400;-webkit-text-stroke:0.5px #3a3a3a;">Negeren</span>
</body></html>
